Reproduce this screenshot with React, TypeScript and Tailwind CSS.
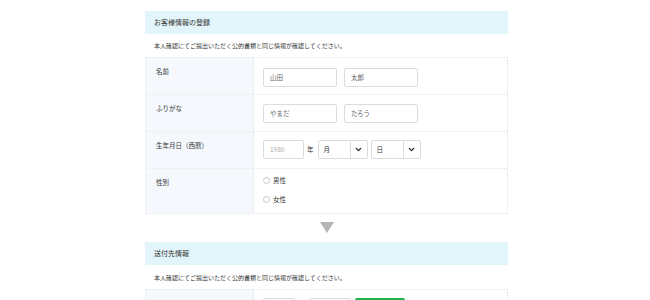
import { ChevronDown } from "lucide-react"

const font = { fontFamily: '"Noto Sans CJK JP", "Noto Sans", sans-serif' }

function TextBox({ value, w = "w-[74px]", muted = false }: { value: string; w?: string; muted?: boolean }) {
  return (
    <div className={`${w} h-[19px] border border-[#dcdcdc] rounded-[2px] bg-white flex items-center px-[6px] text-[6.5px] ${muted ? "text-[#aaa]" : "text-[#666]"}`}>
      {value}
    </div>
  )
}

function Select({ value }: { value: string }) {
  return (
    <div className="w-[50px] h-[19px] border border-[#dcdcdc] rounded-[2px] bg-white flex items-stretch text-[6.5px] text-[#333]">
      <div className="flex-1 flex items-center pl-[5px]">{value}</div>
      <div className="w-[17px] border-l border-[#dcdcdc] flex items-center justify-center">
        <ChevronDown size={9} strokeWidth={3.5} className="text-[#222]" />
      </div>
    </div>
  )
}

function Row({ label, h, children, last = false }: { label: string; h: string; children: React.ReactNode; last?: boolean }) {
  return (
    <div className={`flex ${h} border-t border-dotted border-[#e2e2e2] ${last ? "border-b" : ""}`}>
      <div className="w-[108px] shrink-0 bg-[#f5f9fe] border-r border-dotted border-[#e2e2e2] pl-[10px] pt-[9px] text-[6.5px] text-[#333]">
        {label}
      </div>
      <div className="flex-1 pl-[9px]">{children}</div>
    </div>
  )
}

export default function App() {
  return (
    <div className="w-[650px] h-[300px] bg-white overflow-hidden" style={font}>
      <div className="ml-[145px] w-[363px] pt-[11px]">
        {/* 登録 */}
        <div className="h-[23px] bg-[#e2f5fa] flex items-center pl-[9px] text-[7px] text-[#333]">お客様情報の登録</div>
        <div className="h-[23px] flex items-center pl-[9px] text-[6px] text-[#333]">
          本人確認にてご提出いただく公的書類と同じ情報が確認してください。
        </div>
        <div className="border-r border-l border-dotted border-[#e2e2e2]">
          <Row label="名前" h="h-[37px]">
            <div className="flex gap-[7px] pt-[10px]">
              <TextBox value="山田" />
              <TextBox value="太郎" />
            </div>
          </Row>
          <Row label="ふりがな" h="h-[37px]">
            <div className="flex gap-[7px] pt-[9px]">
              <TextBox value="やまだ" />
              <TextBox value="たろう" />
            </div>
          </Row>
          <Row label="生年月日（西暦）" h="h-[37px]">
            <div className="flex items-center pt-[8px]">
              <TextBox value="1980" w="w-[41px]" muted />
              <span className="text-[6.5px] text-[#333] ml-[3px] mr-[4px]">年</span>
              <Select value="月" />
              <div className="w-[3px]" />
              <Select value="日" />
            </div>
          </Row>
          <Row label="性別" h="h-[46px]" last>
            <div className="flex flex-col gap-[9px] pt-[7px] text-[6.5px] text-[#333]">
              {["男性", "女性"].map((g) => (
                <div key={g} className="flex items-center gap-[3px]">
                  <span className="w-[7px] h-[7px] rounded-full border border-[#c8c8c8] bg-white" />
                  {g}
                </div>
              ))}
            </div>
          </Row>
        </div>

        {/* arrow */}
        <div className="h-[28px] flex justify-center items-start pt-[8px]">
          <svg width="14" height="11" viewBox="0 0 14 11">
            <polygon points="0,0 14,0 7,11" fill="#b5b5b5" />
          </svg>
        </div>

        {/* 送付先 */}
        <div className="h-[23px] bg-[#e2f5fa] flex items-center pl-[9px] text-[7px] text-[#333]">送付先情報</div>
        <div className="h-[24px] flex items-center pl-[9px] text-[6px] text-[#333]">
          本人確認にてご提出いただく公的書類と同じ情報が確認してください。
        </div>
        <div className="border-r border-l border-dotted border-[#e2e2e2]">
          <Row label="" h="h-[37px]">
            <div className="flex items-start pt-[8px]">
              <div className="w-[32px] h-[19px] border border-[#dcdcdc] rounded-[2px]" />
              <div className="w-[14px]" />
              <div className="w-[42px] h-[19px] border border-[#dcdcdc] rounded-[2px]" />
              <div className="w-[4px]" />
              <div className="w-[50px] h-[19px] rounded-[2px] bg-[#22b14c]" />
            </div>
          </Row>
        </div>
      </div>
    </div>
  )
}
